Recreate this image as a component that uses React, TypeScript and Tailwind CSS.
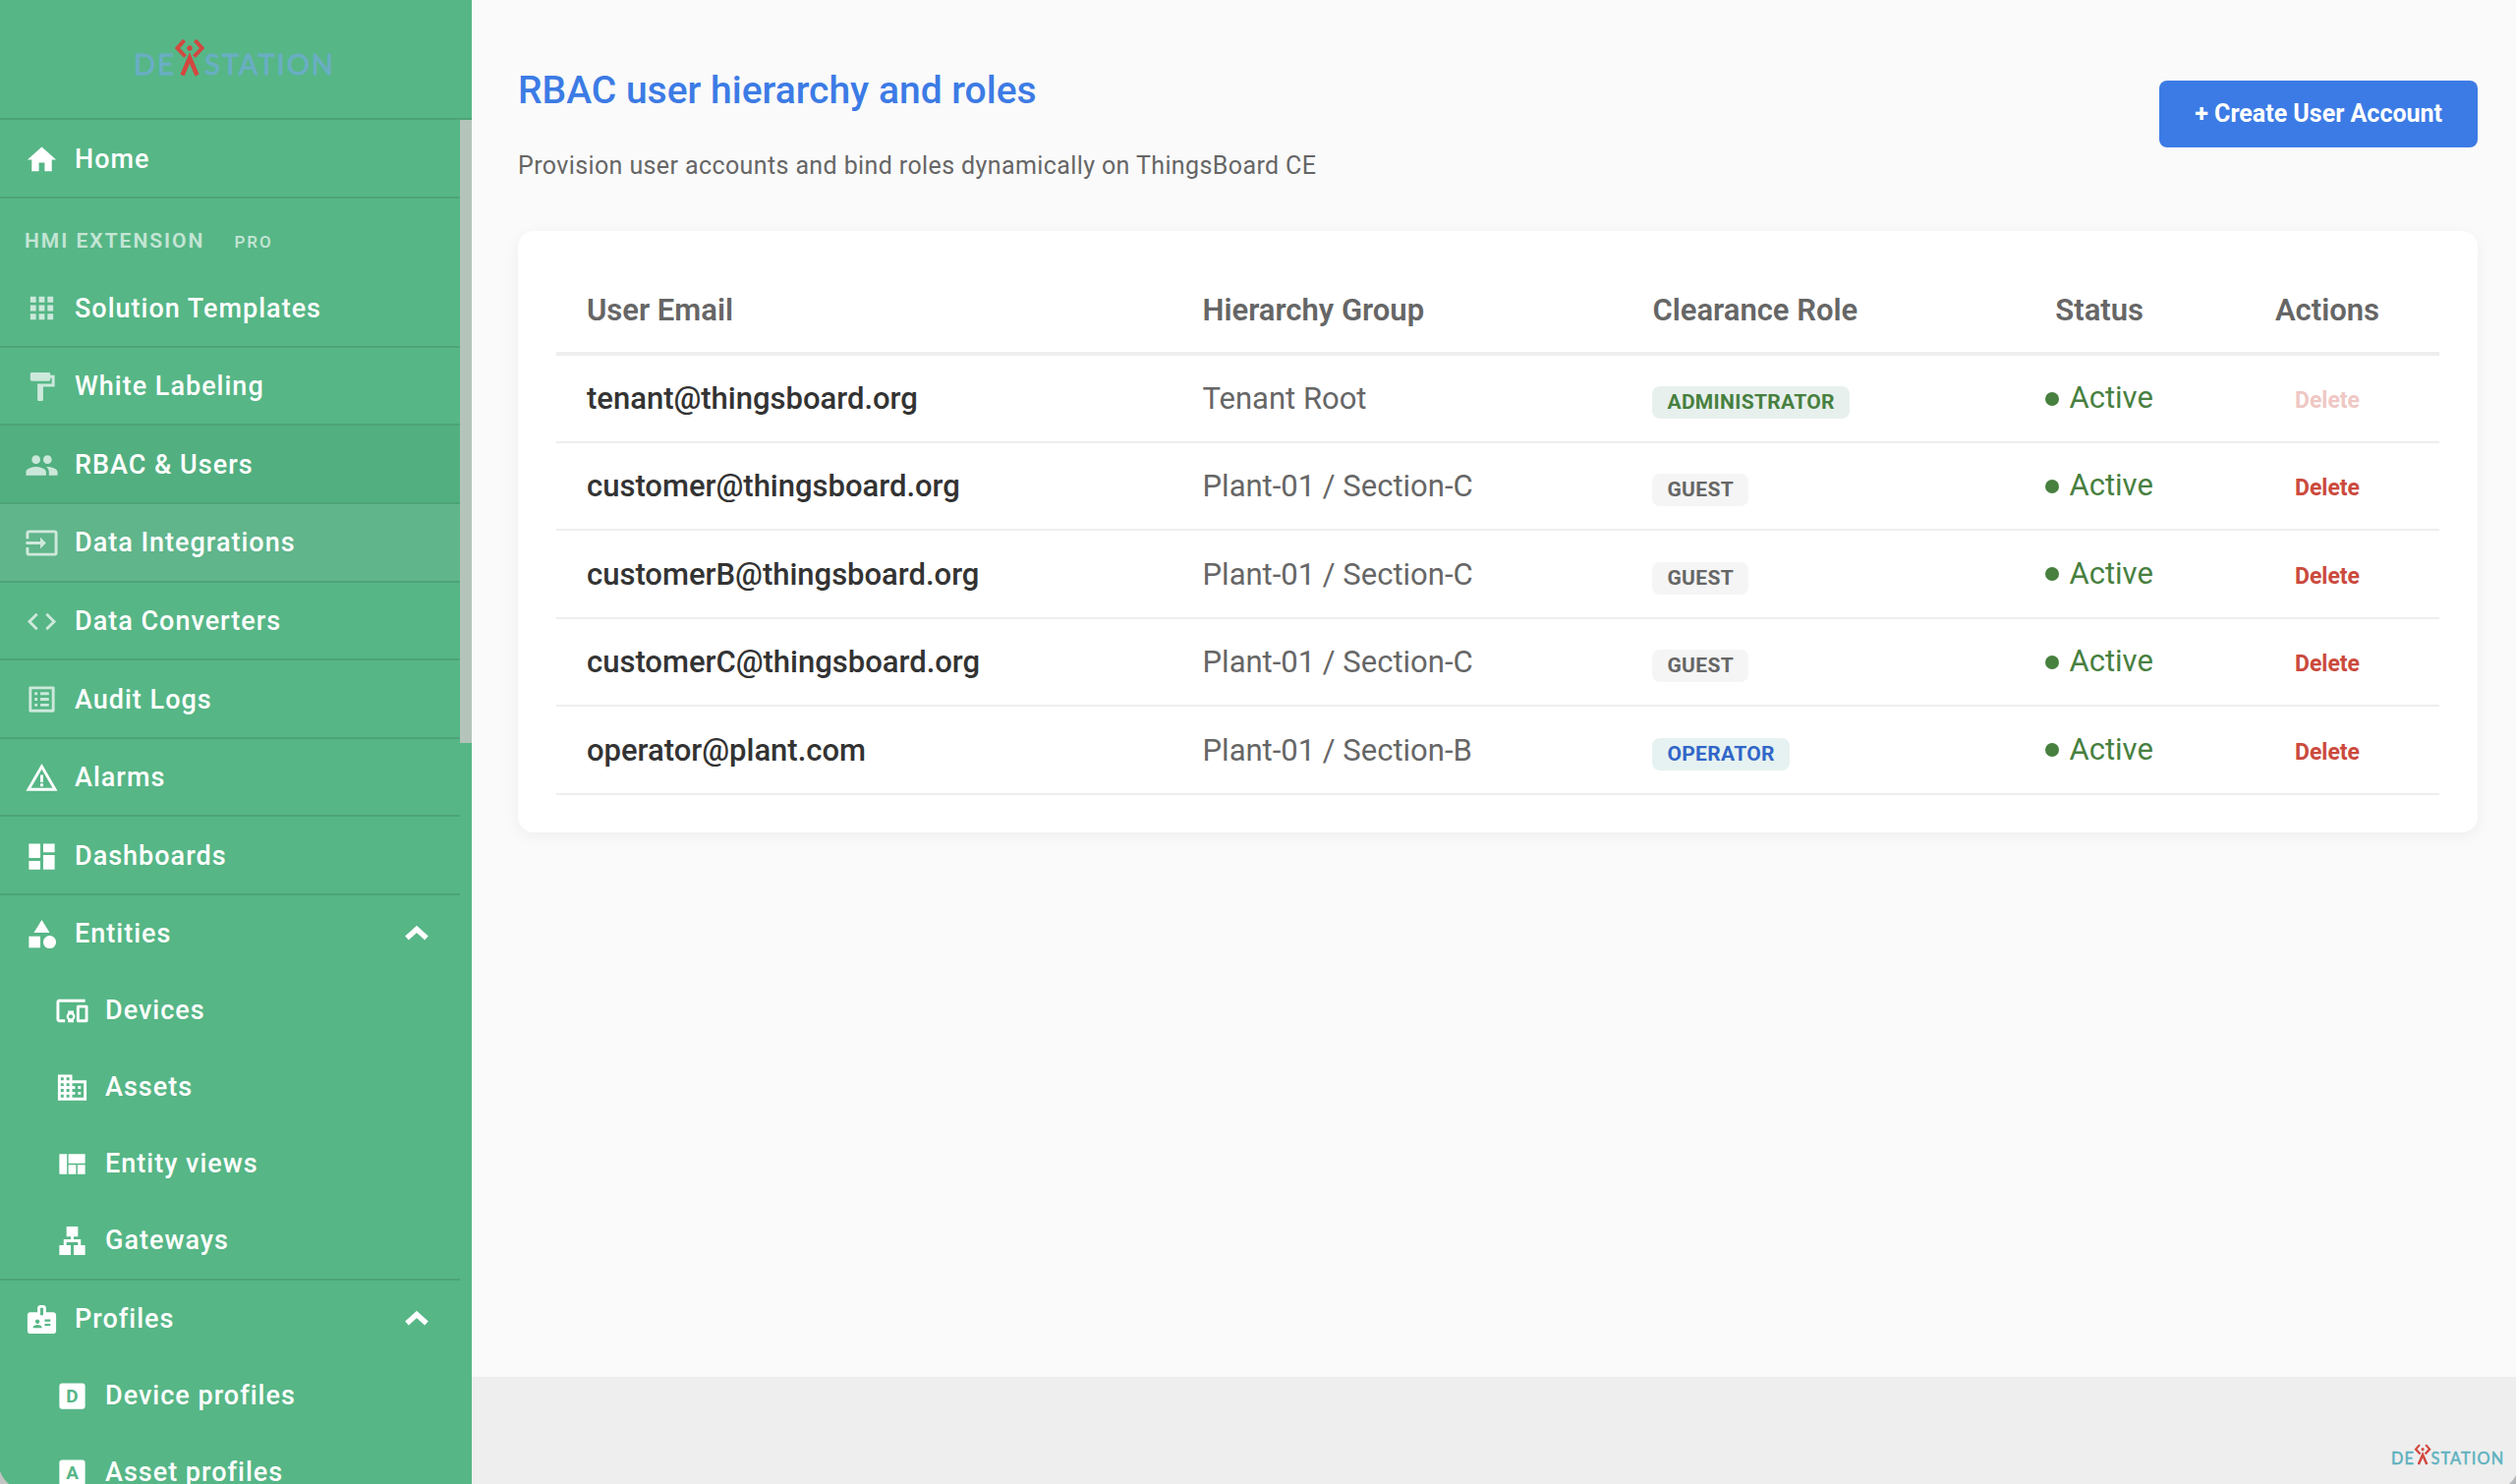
import React from 'react';
import {
  MdApps,
  MdBadge,
  MdCategory,
  MdCode,
  MdDashboard,
  MdDevicesOther,
  MdDomain,
  MdFormatPaint,
  MdHome,
  MdInput,
  MdLan,
  MdListAlt,
  MdPeople,
  MdViewQuilt,
  MdWarningAmber,
} from 'react-icons/md';

interface NavItem {
  icon: React.ReactNode;
  label: string;
  muted?: boolean;
  state?: string;
}

interface NavGroup {
  icon: React.ReactNode;
  label: string;
  items: NavItem[];
}

interface User {
  email: string;
  group: string;
  role: string;
  roleColor: string;
  locked?: boolean;
}

const LetterBox = ({ letter }: { letter: string }) => (
  <svg viewBox="0 0 24 24" width={35} height={35}>
    <rect x="3" y="3" width="18" height="18" rx="2" fill="currentColor" />
    <text x="12" y="16.500" textAnchor="middle" fontSize="13" fontWeight="700" letterSpacing="0" fill="#56b686" fontFamily="Roboto, sans-serif">
      {letter}
    </text>
  </svg>
);

const Logo = ({ className }: { className: string }) => (
  <svg viewBox="0 0 208 42" className={className} role="img" aria-label="DEXSTATION">
    <g fill="currentColor" stroke="currentColor" strokeWidth="0.900" fontFamily="Lato, sans-serif" fontSize="29" fontWeight="400" letterSpacing="2">
      <text x="0" y="37">DE</text>
      <text x="72" y="37">STATION</text>
    </g>
    <g fill="none" stroke="#d2483f" strokeWidth="4">
      <path d="M51.500 2 L44.500 10 L52.500 18.500" />
      <path d="M62.500 2 L69.500 10 L61.500 18.500" />
      <path d="M49.500 37.500 L57 20 L64.500 37.500" strokeWidth="4.500" />
    </g>
    <circle cx="57" cy="10" r="2.700" fill="#d2483f" />
  </svg>
);

const App = () => {
  const mainItems: NavItem[] = [
    { icon: <MdApps size={35} />, label: 'Solution Templates', muted: true },
    { icon: <MdFormatPaint size={35} />, label: 'White Labeling', muted: true },
    { icon: <MdPeople size={35} />, label: 'RBAC & Users', muted: true, state: 'bg-[#52af80]' },
    { icon: <MdInput size={35} />, label: 'Data Integrations', muted: true, state: 'bg-[#60b58b]' },
    { icon: <MdCode size={35} />, label: 'Data Converters', muted: true },
    { icon: <MdListAlt size={35} />, label: 'Audit Logs', muted: true },
    { icon: <MdWarningAmber size={35} />, label: 'Alarms' },
    { icon: <MdDashboard size={35} />, label: 'Dashboards' },
  ];

  const groups: NavGroup[] = [
    {
      icon: <MdCategory size={35} />,
      label: 'Entities',
      items: [
        { icon: <MdDevicesOther size={35} />, label: 'Devices' },
        { icon: <MdDomain size={35} />, label: 'Assets' },
        { icon: <MdViewQuilt size={35} />, label: 'Entity views' },
        { icon: <MdLan size={35} />, label: 'Gateways' },
      ],
    },
    {
      icon: <MdBadge size={35} />,
      label: 'Profiles',
      items: [
        { icon: <LetterBox letter="D" />, label: 'Device profiles' },
        { icon: <LetterBox letter="A" />, label: 'Asset profiles' },
      ],
    },
  ];

  const users: User[] = [
    { email: 'tenant@thingsboard.org', group: 'Tenant Root', role: 'ADMINISTRATOR', roleColor: 'bg-[#e8f0ee] text-[#47803f]', locked: true },
    { email: 'customer@thingsboard.org', group: 'Plant-01 / Section-C', role: 'GUEST', roleColor: 'bg-[#f5f5f5] text-[#666666]' },
    { email: 'customerB@thingsboard.org', group: 'Plant-01 / Section-C', role: 'GUEST', roleColor: 'bg-[#f5f5f5] text-[#666666]' },
    { email: 'customerC@thingsboard.org', group: 'Plant-01 / Section-C', role: 'GUEST', roleColor: 'bg-[#f5f5f5] text-[#666666]' },
    { email: 'operator@plant.com', group: 'Plant-01 / Section-B', role: 'OPERATOR', roleColor: 'bg-[#e6f2f1] text-[#3166c8]' },
  ];

  return (
    <div className="relative flex h-screen overflow-hidden bg-[#fafafa] font-[Roboto,sans-serif]">
      <aside className="flex w-[480px] shrink-0 flex-col bg-[#56b686] text-[27px] font-medium tracking-[1px] text-white">
        <div className="flex h-[122px] shrink-0 items-center justify-center border-b-2 border-[#4da377]">
          <Logo className="w-52 text-[#6aaec4]" />
        </div>
        <div className="flex min-h-0 flex-1">
          <nav className="flex-1 overflow-hidden">
            <a href="#home" className="flex h-20 items-center gap-4 border-b-2 border-[#4da377] pt-0.5 pl-[25px]">
              <MdHome size={35} />
              Home
            </a>
            <div className="flex h-[72px] items-baseline gap-[30px] px-[25px] pt-7 text-[21px] font-semibold tracking-[2px] text-white/65">
              HMI EXTENSION
              <span className="text-[17px] font-medium">PRO</span>
            </div>
            <div className="grid h-[637px] auto-rows-fr">
              {mainItems.map((item) => (
                <a
                  key={item.label}
                  href="#section"
                  className={`flex items-center gap-4 border-b-2 border-[#4da377] pt-0.5 pl-[25px] ${item.state ?? ''}`}
                >
                  <span className={item.muted ? 'text-white/70' : ''}>{item.icon}</span>
                  {item.label}
                </a>
              ))}
            </div>
            {groups.map((group) => (
              <div key={group.label} className="border-b-2 border-[#4da377]">
                <button type="button" className="flex h-[78px] w-full items-center gap-4 pr-8 pl-[25px] text-left">
                  {group.icon}
                  <span className="flex-1">{group.label}</span>
                  <svg viewBox="0 0 24 16" className="h-4 w-6" fill="none" stroke="currentColor" strokeWidth="5.500">
                    <path d="M2 12.500 L12 3.500 L22 12.500" />
                  </svg>
                </button>
                {group.items.map((item) => (
                  <a key={item.label} href="#section" className="flex h-[78px] items-center gap-4 pl-14">
                    {item.icon}
                    {item.label}
                  </a>
                ))}
              </div>
            ))}
          </nav>
          <div className="w-3 shrink-0">
            <div className="h-[634px] bg-[#b4c4ba]"></div>
          </div>
        </div>
      </aside>

      <div className="flex min-w-0 flex-1 flex-col">
        <main className="flex-1 pt-9 pr-[39px] pl-[47px]">
          <div className="mb-10 flex items-center justify-between">
            <div className="pt-7">
              <h1 className="text-[39px] leading-[56px] font-medium text-[#3c7be5]">RBAC user hierarchy and roles</h1>
              <p className="mt-[22px] text-[25px] leading-[53px] tracking-[0.0156em] text-[#666666]">
                Provision user accounts and bind roles dynamically on ThingsBoard CE
              </p>
            </div>
            <button type="button" className="h-[68px] rounded-lg bg-[#3c7be5] px-9 text-[25px] font-bold text-white">
              + Create User Account
            </button>
          </div>

          <section className="rounded-2xl bg-white px-[39px] pt-[39px] pb-[38px] shadow-[0_4px_16px_rgba(0,0,0,0.05)]">
            <table className="w-full table-fixed text-left text-[31px]">
              <thead>
                <tr className="h-[86px] border-b-4 border-[#eeeeee] text-[#666666]">
                  <th className="w-[32.7%] pl-[31px] font-semibold">User Email</th>
                  <th className="w-[23.9%] pl-[31px] font-semibold">Hierarchy Group</th>
                  <th className="w-[19.2%] pl-[31px] font-semibold">Clearance Role</th>
                  <th className="w-[12.3%] text-center font-semibold">Status</th>
                  <th className="w-[11.9%] text-center font-semibold">Actions</th>
                </tr>
              </thead>
              <tbody>
                {users.map((user) => (
                  <tr key={user.email} className="border-b-2 border-[#eeeeee] odd:h-[90px] even:h-[89px]">
                    <td className="pt-0.5 pl-[31px] font-medium text-[#333333]">{user.email}</td>
                    <td className="pt-0.5 pl-[31px] text-[#666666]">{user.group}</td>
                    <td className="pt-0.5 pl-[31px]">
                      <span className={`inline-block rounded-lg px-[15px] text-[21px] leading-[33px] font-bold tracking-[0.0156em] ${user.roleColor}`}>
                        {user.role}
                      </span>
                    </td>
                    <td className="text-[#47803f]">
                      <div className="flex items-center justify-center gap-2.5">
                        <span className="size-3.5 rounded-full bg-[#47803f]"></span>
                        Active
                      </div>
                    </td>
                    <td className="text-center">
                      <button type="button" disabled={user.locked} className="text-[23px] font-bold text-[#cb4a3d] disabled:opacity-30">
                        Delete
                      </button>
                    </td>
                  </tr>
                ))}
              </tbody>
            </table>
          </section>
        </main>
        <footer className="flex h-[109px] items-end justify-end bg-[#eeeeee] pr-2.5 pb-[17px]">
          <Logo className="w-[117px] text-[#5fb2c0]" />
        </footer>
      </div>

      {/* rounded window corners */}
      <svg viewBox="0 0 9 13" className="absolute bottom-0 left-0 h-[13px] w-[9px]" fill="#c4c4c4">
        <path d="M0 0 Q3 8 9 13 H0 Z" />
      </svg>
      <svg viewBox="0 0 7 9" className="absolute right-0 bottom-0 h-[9px] w-[7px]" fill="#b5b8ba">
        <path d="M7 0 Q4.500 5 0 9 H7 Z" />
      </svg>
    </div>
  );
};

export default App;
